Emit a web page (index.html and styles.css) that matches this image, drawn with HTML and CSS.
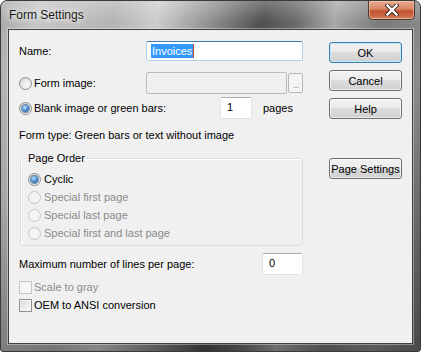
FILE: index.html
```html
<!DOCTYPE html>
<html lang="en">
<head>
  <meta charset="UTF-8">
  <title>Form Settings</title>
  <link rel="stylesheet" href="styles.css">
</head>
<body>
  <div class="window">
    <div class="titlebar">
      <span class="title">Form Settings</span>
      <span class="close">
        <svg width="14" height="12" viewBox="0 0 14 12">
          <path d="M2.5 1.5 L11.5 10.5 M11.5 1.5 L2.5 10.5" stroke="#3d2a24" stroke-width="4.2" stroke-linecap="square"/>
          <path d="M2.5 1.5 L11.5 10.5 M11.5 1.5 L2.5 10.5" stroke="#fff" stroke-width="2.4" stroke-linecap="square"/>
        </svg>
      </span>
    </div>

    <div class="client">
      <div class="main">
        <div class="row">
          <span class="field-label">Name:</span>
          <span class="text focused name"><span class="sel">Invoices</span><span class="caret"></span></span>
        </div>

        <div class="row row-image">
          <span class="field-label"><span class="radio"></span>Form image:</span>
          <span class="text disabled image"></span>
          <span class="browse">...</span>
        </div>

        <div class="row row-blank">
          <span class="field-label wide"><span class="radio checked"></span>Blank image or green bars:</span>
          <span class="text pages">1</span>
          <span class="unit">pages</span>
        </div>

        <div class="note">Form type: Green bars or text without image</div>

        <fieldset class="group">
          <legend>Page Order</legend>
          <div class="option"><span class="radio checked"></span>Cyclic</div>
          <div class="option off"><span class="radio"></span>Special first page</div>
          <div class="option off"><span class="radio"></span>Special last page</div>
          <div class="option off"><span class="radio"></span>Special first and last page</div>
        </fieldset>

        <div class="row row-max">
          <span>Maximum number of lines per page:</span>
          <span class="text lines">0</span>
        </div>

        <div class="check-row off"><span class="check"></span>Scale to gray</div>
        <div class="check-row"><span class="check"></span>OEM to ANSI conversion</div>
      </div>

      <div class="side">
        <button class="btn default">OK</button>
        <button class="btn">Cancel</button>
        <button class="btn">Help</button>
        <button class="btn settings">Page Settings</button>
      </div>
    </div>
  </div>
</body>
</html>
```

FILE: styles.css
```css
body {
  margin: 0;
  background: #fff;
  font-family: "Liberation Sans", Arial, sans-serif;
}

.window {
  width: 421px;
  height: 352px;
  box-sizing: border-box;
  display: flex;
  flex-direction: column;
  border: 1px solid #3a3a3a;
  border-radius: 7px 7px 3px 3px;
  background:
    linear-gradient(180deg, rgba(255, 255, 255, 0.25) 0, rgba(255, 255, 255, 0) 6%, rgba(0, 0, 0, 0) 20%, rgba(0, 0, 0, 0.35) 100%),
    linear-gradient(100deg, #a9a9a9 0%, #c6c6c6 8%, #b4b4b4 24%, #cdcdcd 33%, #8c8c8c 45%, #4f4f4f 55%, #6a6a6a 62%, #a7a7a7 70%, #7a7a7a 80%, #8d8d8d 90%, #6e6e6e 100%);
  overflow: hidden;
}

/* title bar */
.titlebar {
  height: 28px;
  display: flex;
  justify-content: space-between;
  align-items: flex-start;
  flex-shrink: 0;
}

.title {
  margin: 7px 0 0 8px;
  font-size: 12px;
  color: #1b1b1b;
  text-shadow: 0 0 6px #fff, 0 0 10px rgba(255, 255, 255, 0.9);
}

.close {
  width: 47px;
  height: 19px;
  margin-right: 5px;
  box-sizing: border-box;
  display: flex;
  align-items: center;
  justify-content: center;
  border: 1px solid #4b3a35;
  border-top: none;
  border-radius: 0 0 5px 5px;
  background: linear-gradient(180deg, #e9aa92 0%, #d98664 45%, #c2522f 55%, #cc6a47 85%, #dc8f70 100%);
  box-shadow: inset 0 0 0 1px rgba(255, 220, 200, 0.45);
}

/* client area */
.client {
  flex: 1;
  margin: 0 7px 7px;
  display: flex;
  gap: 26px;
  padding-left: 10px;
  background: #f0f0f0;
  border: 1px solid #3f3f3f;
  box-shadow: 0 0 0 1px rgba(255, 255, 255, 0.35);
  font-size: 11px;
  color: #000;
}

.main {
  width: 284px;
  padding-top: 11px;
}

.row {
  display: flex;
  align-items: center;
}

.field-label {
  width: 127px;
  display: flex;
  align-items: center;
}

.field-label.wide {
  width: 201px;
}

.text {
  box-sizing: border-box;
  display: flex;
  align-items: center;
  padding-left: 4px;
  background: #fff;
  border: 1px solid #e2e3ea;
  border-top-color: #abadb3;
  border-radius: 2px;
}

.text.focused {
  border-color: #b5cfe7;
  border-top-color: #3d7bad;
}

.name {
  width: 157px;
  height: 20px;
}

.sel {
  background: #3399ff;
  color: #fff;
  padding: 0 1px;
  line-height: 14px;
}

.caret {
  width: 1px;
  height: 14px;
  background: #c0502e;
}

.row-image {
  margin-top: 11px;
}

.text.disabled {
  background: #f0f0f0;
  border-color: #b8bcc0;
}

.image {
  width: 141px;
  height: 22px;
}

.browse {
  width: 15px;
  height: 20px;
  margin-left: 1px;
  box-sizing: border-box;
  border: 1px solid #b6b6b6;
  border-radius: 2px;
  background: #f4f4f4;
  color: #8aa4bf;
  font-size: 10px;
  line-height: 22px;
  text-align: center;
  letter-spacing: -1px;
}

.row-blank {
  margin-top: 3px;
}

.pages {
  width: 32px;
  height: 22px;
  padding-left: 6px;
  align-items: flex-start;
  padding-top: 3px;
}

.unit {
  margin-left: 11px;
}

.note {
  margin-top: 10px;
  line-height: 13px;
}

/* radios and checkboxes */
.radio {
  width: 13px;
  height: 13px;
  box-sizing: border-box;
  margin-right: 2px;
  border-radius: 50%;
  border: 1px solid #8e8f8f;
  background: radial-gradient(circle at 65% 65%, #fbfbfb 0, #e9e9e9 45%, #cfcfcf 100%);
  display: flex;
  align-items: center;
  justify-content: center;
  flex-shrink: 0;
}

.radio.checked::after {
  content: "";
  width: 7px;
  height: 7px;
  border-radius: 50%;
  background: radial-gradient(circle at 40% 35%, #c6e8fd 0, #4d93d2 45%, #1c4e8a 100%);
  box-shadow: 0 0 0 1px rgba(28, 70, 120, 0.6);
}

.group {
  margin: 10px 0 0 1px;
  padding: 5px 0 3px 7px;
  border: 1px solid #d5dfe5;
  border-radius: 3px;
  box-shadow: inset 1px 1px 0 #fff;
}

.group legend {
  margin-left: -1px;
  padding: 0 1px;
  line-height: 13px;
}

.option {
  height: 18px;
  display: flex;
  align-items: center;
}

.option .radio {
  margin-right: 3px;
}

.off {
  color: #8b8b8b;
}

.off .radio {
  border-color: #c6c6c6;
  background: #f3f3f3;
}

.row-max {
  margin-top: 7px;
  justify-content: space-between;
}

.lines {
  width: 41px;
  height: 22px;
  padding-left: 6px;
  align-items: flex-start;
  padding-top: 3px;
}

.check-row {
  height: 18px;
  display: flex;
  align-items: center;
}

.row-max + .check-row {
  margin-top: 3px;
}

.check {
  width: 13px;
  height: 13px;
  box-sizing: border-box;
  margin-right: 2px;
  border: 1px solid #8e8f8f;
  background: linear-gradient(135deg, #cfd2d6 0%, #eeeeee 60%, #f8f8f8 100%);
  box-shadow: inset 0 0 0 1px #f4f4f4;
}

.off .check {
  border-color: #c6c6c6;
  background: #f6f6f6;
}

/* buttons */
.side {
  width: 73px;
  padding-top: 12px;
  display: flex;
  flex-direction: column;
  gap: 7px;
}

.btn {
  height: 21px;
  padding: 0;
  border: 1px solid #707070;
  border-radius: 3px;
  background: linear-gradient(180deg, #f2f2f2 0%, #ebebeb 49%, #dddddd 50%, #cfcfcf 100%);
  box-shadow: inset 0 0 0 1px rgba(255, 255, 255, 0.6);
  font-family: "Liberation Sans", Arial, sans-serif;
  font-size: 11px;
  color: #000;
  white-space: nowrap;
}

.btn.default {
  border-color: #3c7fb1;
  box-shadow: inset 0 0 0 1px #c4e5f6;
}

.btn.settings {
  margin-top: 32px;
}
```
